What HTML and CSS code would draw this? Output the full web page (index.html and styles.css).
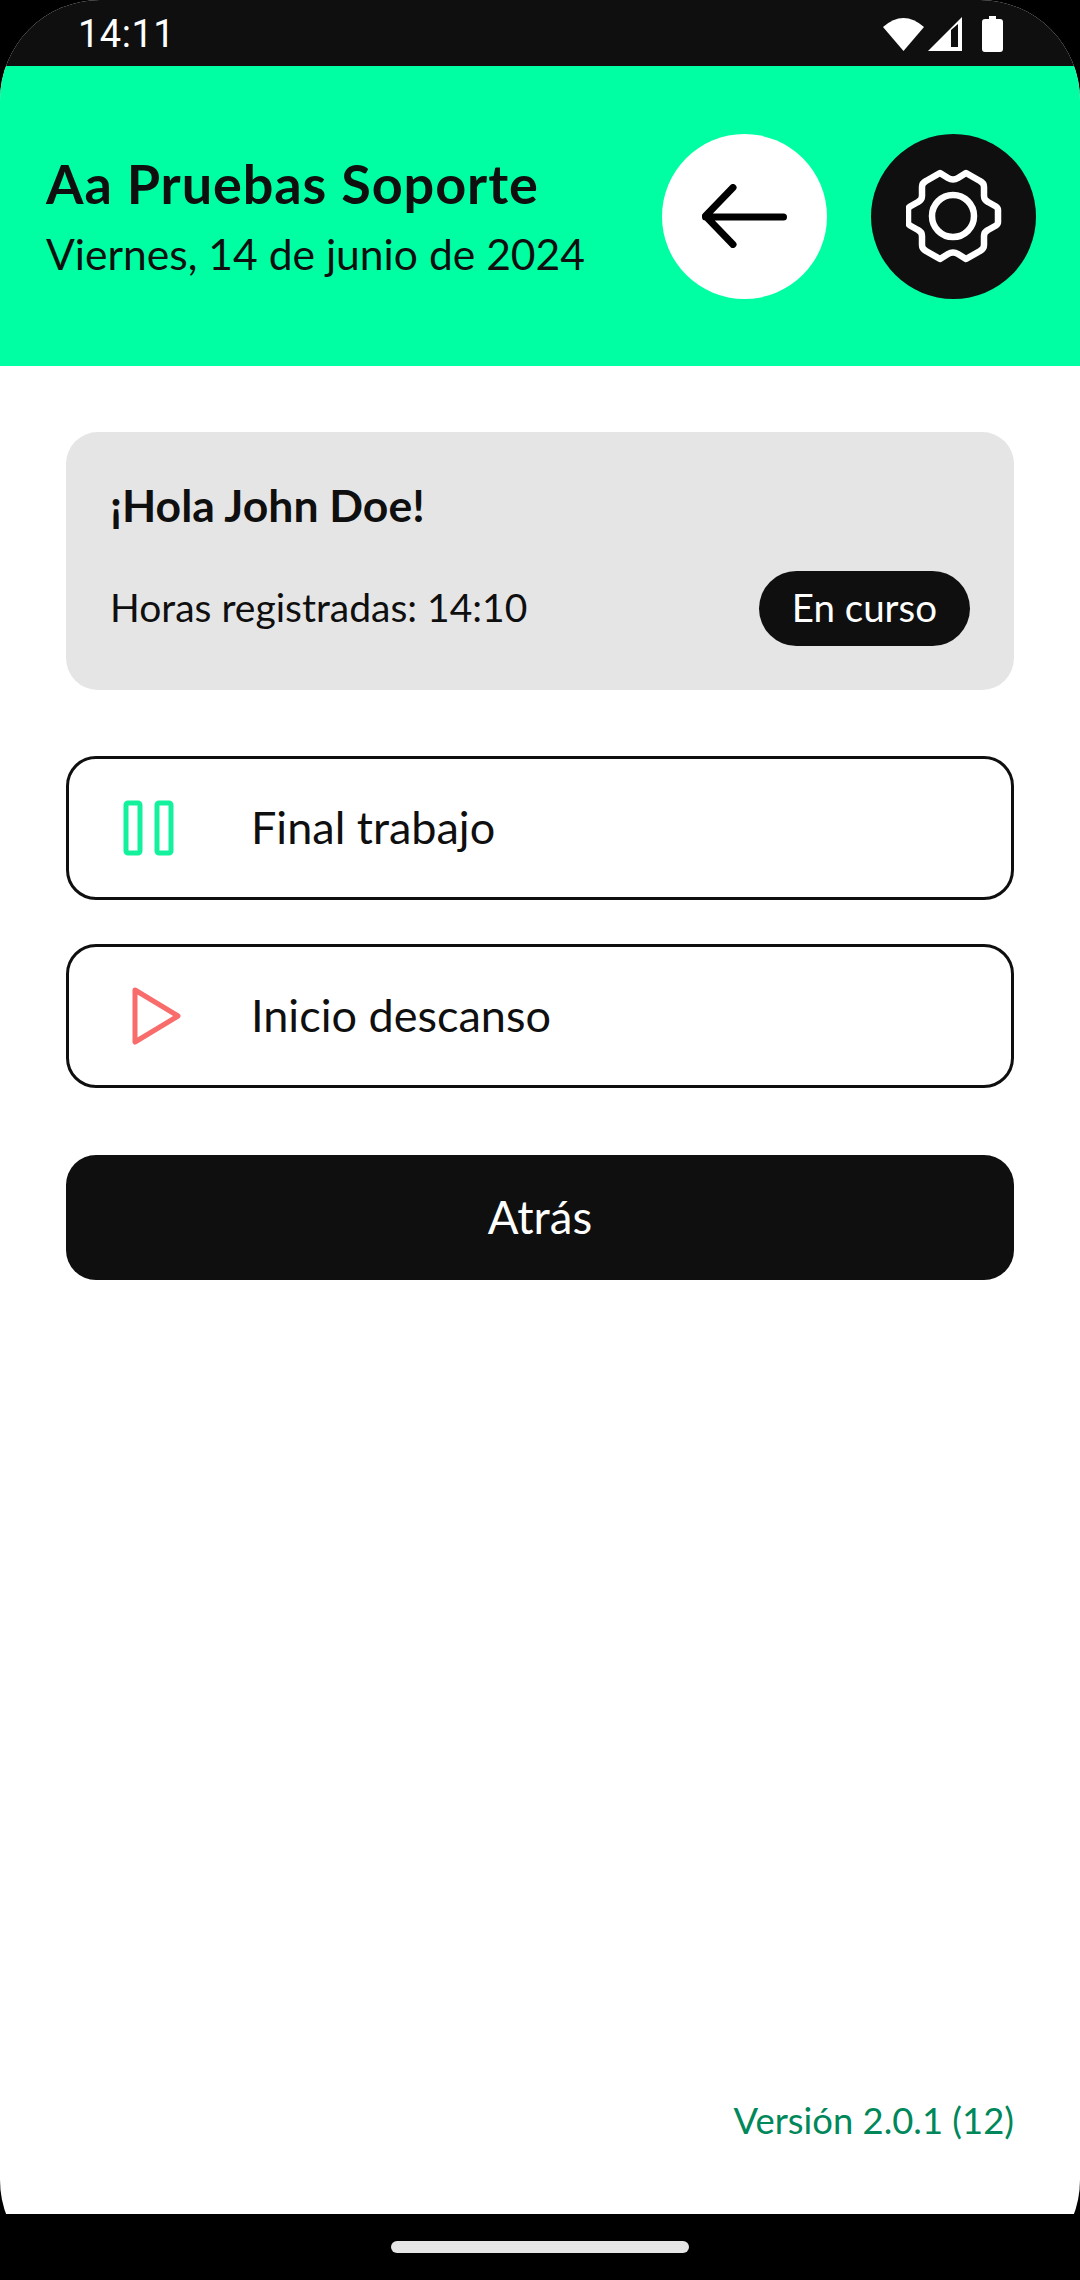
FILE: index.html
```html
<!DOCTYPE html>
<html lang="es">
<head>
<meta charset="utf-8">
<title>Pruebas Soporte</title>
<link rel="stylesheet" href="styles.css">
</head>
<body>
<div class="device">
  <div class="screen">
    <div class="status">
      <span class="clock">14:11</span>
      <div class="status-icons">
        <svg class="ic-wifi" width="41" height="36" viewBox="0 0 41 36"><path d="M20.500 35 L0 11 Q20.500 -7 41 11 Z" fill="#fff"/></svg>
        <svg class="ic-signal" width="34" height="36" viewBox="0 0 34 36"><path fill-rule="evenodd" d="M0 35 L34 1 V35 Z M23 14 V31 H30 V8 Z" fill="#fff"/></svg>
        <svg class="ic-batt" width="21" height="36" viewBox="0 0 21 36"><path d="M7 0 H14 V3 H18 Q21 3 21 6 V33 Q21 36 18 36 H3 Q0 36 0 33 V6 Q0 3 3 3 H7 Z" fill="#fff"/></svg>
      </div>
    </div>
    <header class="header">
      <div class="titles">
        <h1 class="title">Aa Pruebas Soporte</h1>
        <p class="date">Viernes, 14 de junio de 2024</p>
      </div>
      <div class="round-actions">
        <button class="round round-light">
          <svg width="85" height="64" viewBox="0 0 85 64"><path d="M81.500 33 H3.500 M31 3.500 L3.500 32 L31 60.500" fill="none" stroke="#000" stroke-width="7" stroke-linecap="round" stroke-linejoin="round"/></svg>
        </button>
        <button class="round round-dark">
          <svg width="96" height="96" viewBox="1 0 96 96"><g fill="none" stroke="#fff" stroke-width="6.500" stroke-linejoin="round"><circle cx="48" cy="48" r="21"/><path d="M35 5 L43 10 Q48 13 53 10 L61 5 L75 13 Q79 15 79 19 V28 Q79 32 83 34 L91 38.500 Q93 40 93 42 V54 Q93 56 91 57.500 L83 62 Q79 64 79 68 V77 Q79 81 75 83 L61 91 L53 86 Q48 83 43 86 L35 91 L21 83 Q17 81 17 77 V68 Q17 64 13 62 L5 57.500 Q3 56 3 54 V42 Q3 40 5 38.500 L13 34 Q17 32 17 28 V19 Q17 15 21 13 Z"/></g></svg>
        </button>
      </div>
    </header>
    <main class="content">
      <section class="card">
        <h2 class="greeting">¡Hola John Doe!</h2>
        <div class="card-row">
          <span class="hours">Horas registradas: 14:10</span>
          <span class="pill">En curso</span>
        </div>
      </section>
      <div class="actions">
        <button class="action">
          <span class="action-icon">
            <svg width="52" height="56" viewBox="0 0 52 56"><g fill="none" stroke="#14f19c" stroke-width="5" stroke-linejoin="round"><rect x="3" y="3" width="14" height="50" rx="2"/><rect x="34" y="3" width="14" height="50" rx="2"/></g></svg>
          </span>
          <span class="action-label">Final trabajo</span>
        </button>
        <button class="action">
          <span class="action-icon">
            <svg width="60" height="60" viewBox="0 0 60 60"><path d="M12 4 L55 30 L12 56 Z" fill="none" stroke="#f96c6c" stroke-width="5" stroke-linejoin="round"/></svg>
          </span>
          <span class="action-label">Inicio descanso</span>
        </button>
      </div>
      <button class="back">Atrás</button>
      <p class="version">Versión 2.0.1 (12)</p>
    </main>
  </div>
  <div class="navbar"><span class="home-pill"></span></div>
</div>
</body>
</html>
```
FILE: styles.css
```css
* { box-sizing: border-box; }
html, body { margin: 0; padding: 0; background: #000; }
body { width: 1080px; height: 2280px; font-family: "Lato", "Noto Sans", sans-serif; color: #0f0f0f; }
.device { position: relative; width: 1080px; height: 2280px; }
.screen { width: 1080px; height: 2280px; border-radius: 100px; overflow: hidden; background: #fff; display: flex; flex-direction: column; }
.status { height: 66px; background: #0f0f0f; color: #fff; display: flex; align-items: center; justify-content: space-between; padding: 2px 77px 0 78px; flex: none; }
.clock { font-family: "Roboto", sans-serif; font-size: 38px; letter-spacing: 0.5px; }
.status-icons { display: flex; align-items: center; }
.ic-signal { margin-left: 4px; }
.ic-batt { margin-left: 20px; }
.header { height: 300px; flex: none; background: #00ffa3; display: flex; align-items: center; justify-content: space-between; padding: 0 44px 0 46px; }
.title { margin: 0; font-size: 54px; line-height: 62px; font-weight: 700; letter-spacing: 0.9px; }
.date { margin: 13px 0 0; font-size: 42.600px; line-height: 52px; font-weight: 400; }
.round-actions { display: flex; gap: 44px; }
.round { width: 165px; height: 165px; border: 0; border-radius: 50%; padding: 0; display: flex; align-items: center; justify-content: center; }
.round-light { background: #fff; }
.round-dark { background: #0f0f0f; }
.content { flex: 1; display: flex; flex-direction: column; padding: 66px 66px 0 66px; }
.card { height: 258px; background: #e5e5e5; border-radius: 32px; padding: 48px 44px 0; }
.greeting { margin: 0; font-size: 44.500px; line-height: 50px; font-weight: 700; }
.card-row { display: flex; align-items: center; justify-content: space-between; margin-top: 41px; }
.hours { font-size: 39px; padding-bottom: 4px; }
.pill { height: 75px; padding: 0 33px 3px; border-radius: 38px; background: #0f0f0f; color: #fff; font-size: 38.500px; display: flex; align-items: center; }
.actions { display: flex; flex-direction: column; gap: 44px; margin-top: 66px; }
.action { height: 144px; border: 3px solid #0f0f0f; border-radius: 30px; background: #fff; display: flex; align-items: center; padding: 0; font-family: inherit; color: inherit; }
.action-icon { width: 182px; flex: none; display: flex; justify-content: flex-start; padding-left: 54px; }
.action-label { font-size: 45px; padding-bottom: 2px; }
.back { height: 125px; margin-top: 67px; padding: 0 0 2px; border: 0; border-radius: 30px; background: #0f0f0f; color: #fff; font-family: inherit; font-size: 45.500px; }
.version { margin: auto 0 138px; text-align: right; font-size: 36.400px; line-height: 44px; color: #00875a; }
.navbar { position: absolute; left: 0; right: 0; bottom: 0; height: 66px; background: #000; display: flex; justify-content: center; padding-top: 27px; }
.home-pill { width: 298px; height: 12px; border-radius: 6px; background: #e6e6e6; }
```
